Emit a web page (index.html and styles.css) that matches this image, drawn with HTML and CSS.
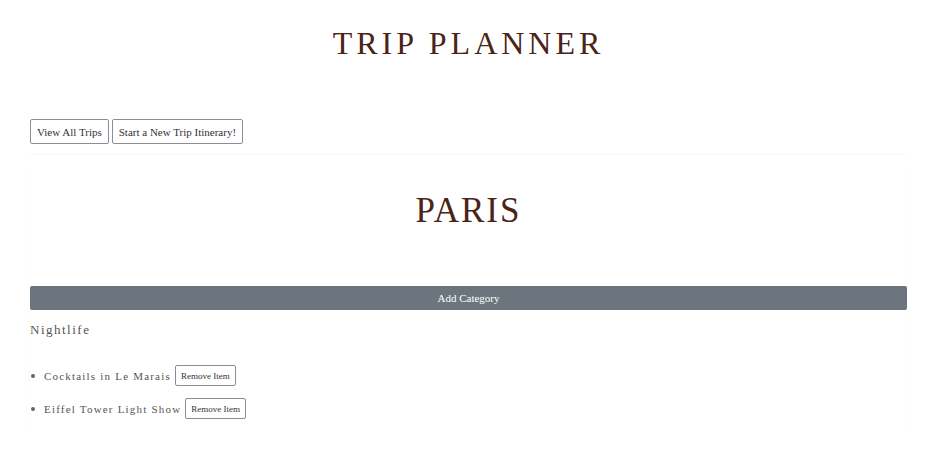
FILE: index.html
```html
<!DOCTYPE html>
<html>
<head>
<meta charset="utf-8">
<link rel="stylesheet" href="styles.css">
</head>
<body>
<div class="page">
  <h1 class="title">TRIP PLANNER</h1>
  <div class="nav">
    <button class="btn">View All Trips</button>
    <button class="btn">Start a New Trip Itinerary!</button>
  </div>
  <div class="card">
    <h2 class="trip">PARIS</h2>
    <button class="add">Add Category</button>
    <h3 class="cat">Nightlife</h3>
    <ul class="items">
      <li><span class="item-name">Cocktails in Le Marais</span><button class="btn small">Remove Item</button></li>
      <li><span class="item-name">Eiffel Tower Light Show</span><button class="btn small">Remove Item</button></li>
    </ul>
  </div>
</div>
</body>
</html>
```
FILE: styles.css
```css
* { box-sizing: border-box; }
html, body { margin: 0; background: #fff; }
body { font-family: "Liberation Serif", "Times New Roman", serif; color: #333; }
.page { width: 877px; margin: 0 0 0 30px; }
.title {
  margin: 0;
  padding-top: 27px;
  height: 119px;
  text-align: center;
  font-weight: normal;
  font-size: 32px;
  letter-spacing: 4px;
  color: #4a2416;
  line-height: 32px;
}
.nav { display: flex; gap: 3px; }
.btn {
  font-family: "Liberation Serif", "Times New Roman", serif;
  font-size: 11px;
  color: #333;
  background: #fff;
  border: 1px solid #8a8f95;
  border-radius: 2px;
  height: 25px;
  padding: 0 6px;
}
.card {
  margin-top: 10px;
  border-top: 1px solid #f6f6f6;
  box-shadow: 0 10px 12px -6px rgba(0,0,0,0.05);
  padding-top: 38px;
  padding-bottom: 3px;
}
.trip {
  margin: 0;
  text-align: center;
  font-weight: normal;
  font-size: 35px;
  letter-spacing: 2px;
  color: #4a2416;
  line-height: 36px;
  height: 93px;
}
.add {
  display: block;
  width: 100%;
  height: 24px;
  background: #6c757d;
  color: #fff;
  border: none;
  border-radius: 2px;
  font-family: "Liberation Serif", "Times New Roman", serif;
  font-size: 11px;
}
.cat {
  margin: 12px 0 0;
  font-weight: normal;
  font-size: 13px;
  letter-spacing: 1.5px;
  color: #555;
  line-height: 16px;
}
.items { list-style: none; margin: 27px 0 0; padding: 0; }
.items li {
  display: flex;
  align-items: center;
  gap: 4px;
  margin-bottom: 12px;
  font-size: 11px;
  letter-spacing: 1.2px;
  color: #555;
}
.items li::before {
  content: "";
  width: 4px;
  height: 4px;
  border-radius: 50%;
  background: #666;
  margin: 0 5px 0 1px;
}
.btn.small { font-size: 9px; height: 21px; padding: 0 5px; letter-spacing: 0; }
```
